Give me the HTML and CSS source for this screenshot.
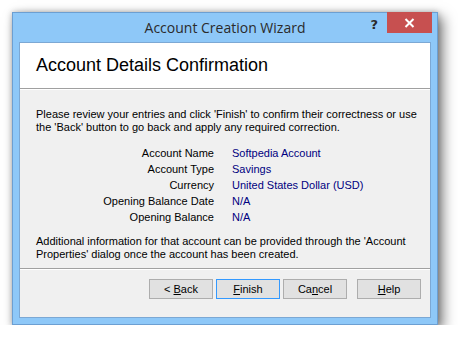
FILE: index.html
```html
<!DOCTYPE html>
<html>
<head>
<meta charset="utf-8">
<link rel="stylesheet" href="styles.css">
</head>
<body>
<div class="window">
  <div class="titlebar">
    <div></div>
    <div class="title">Account Creation Wizard</div>
    <div class="controls">
      <span class="help-q">?</span>
      <span class="close">
        <svg width="11" height="10" viewBox="0 0 11 10"><path d="M1.5 1 L9.5 9 M9.5 1 L1.5 9" stroke="#fff" stroke-width="2" fill="none"/></svg>
      </span>
    </div>
  </div>
  <div class="client">
    <div class="header">Account Details Confirmation</div>
    <div class="body">
      <p class="para">Please review your entries and click 'Finish' to confirm their correctness or use the 'Back' button to go back and apply any required correction.</p>
      <div class="details">
        <span class="lbl">Account Name</span><span class="val">Softpedia Account</span>
        <span class="lbl">Account Type</span><span class="val">Savings</span>
        <span class="lbl">Currency</span><span class="val">United States Dollar (USD)</span>
        <span class="lbl">Opening Balance Date</span><span class="val">N/A</span>
        <span class="lbl">Opening Balance</span><span class="val">N/A</span>
      </div>
      <p class="para para2">Additional information for that account can be provided through the 'Account Properties' dialog once the account has been created.</p>
    </div>
    <div class="footer">
      <button class="btn">&lt; <u>B</u>ack</button>
      <button class="btn btn-default"><u>F</u>inish</button>
      <button class="btn">Ca<u>n</u>cel</button>
      <button class="btn btn-help"><u>H</u>elp</button>
    </div>
  </div>
</div>
</body>
</html>
```

FILE: styles.css
```css
html, body {
  margin: 0;
  padding: 0;
  background: #ffffff;
}
body {
  padding: 12px 0 0 12px;
  font-family: "Liberation Sans", Arial, sans-serif;
}
.window {
  width: 424px;
  height: 311px;
  border: 1px solid #6c9fd2;
  background: #8ec8f8;
  box-shadow: 5px 5px 12px rgba(0,0,0,0.5), 0 0 6px rgba(0,0,0,0.25);
  display: flex;
  flex-direction: column;
}
.titlebar {
  height: 29px;
  display: grid;
  grid-template-columns: 1fr auto 1fr;
  align-items: start;
}
.title {
  font-family: "Open Sans", "Noto Sans", sans-serif;
  font-size: 14px;
  color: #2b2b2b;
  line-height: 29px;
}
.controls {
  justify-self: end;
  display: flex;
  align-items: flex-start;
  margin-top: -1px;
  margin-right: 5px;
}
.help-q {
  font-family: "DejaVu Sans", sans-serif;
  font-weight: bold;
  font-size: 13px;
  color: #2a2a2a;
  line-height: 20px;
  margin-top: 3px;
  margin-right: 9px;
}
.close {
  width: 45px;
  height: 21px;
  background: #c75050;
  display: flex;
  align-items: center;
  justify-content: center;
}
.client {
  margin: 0 6px 6px 6px;
  border: 1px solid #7ca8d4;
  background: #f0f0f0;
  height: 274px;
  display: flex;
  flex-direction: column;
}
.header {
  height: 45px;
  background: #ffffff;
  border-bottom: 1px solid #a0a0a0;
  box-shadow: 0 1px 0 #ffffff;
  font-size: 18px;
  color: #000;
  padding-left: 16px;
  line-height: 44px;
  margin-bottom: 1px;
}
.body {
  flex: 1;
  padding: 18px 4px 0 16px;
  font-size: 11px;
  color: #000;
}
.para {
  margin: 0;
  line-height: 13px;
}
.details {
  display: grid;
  grid-template-columns: 178px 1fr;
  column-gap: 18px;
  line-height: 16px;
  margin-top: 11px;
}
.lbl {
  text-align: right;
}
.val {
  color: #000080;
}
.para2 {
  margin-top: 10px;
  padding-right: 10px;
}
.footer {
  border-top: 1px solid #a0a0a0;
  box-shadow: inset 0 1px 0 #ffffff;
  height: 38px;
  padding: 10px 9px 0 0;
  display: flex;
  justify-content: flex-end;
  align-items: flex-start;
  gap: 3px;
}
.btn {
  width: 64px;
  height: 20px;
  margin: 0;
  padding: 0;
  border: 1px solid #adadad;
  background: #e1e1e1;
  font-family: "Liberation Sans", Arial, sans-serif;
  font-size: 11px;
  color: #000;
  line-height: 18px;
}
.btn-default {
  border-color: #3399ff;
}
.btn-help {
  margin-left: 7px;
}
```
